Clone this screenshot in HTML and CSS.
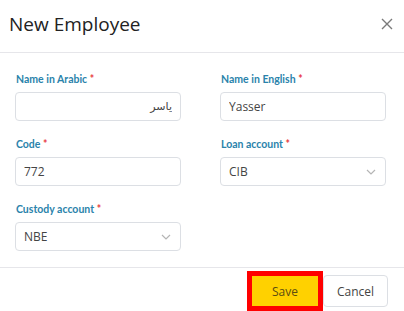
FILE: index.html
```html
<!DOCTYPE html>
<html lang="en">
<head>
    <meta charset="UTF-8">
    <meta name="viewport" content="width=device-width, initial-scale=1.0">
    <title>New Employee</title>
    <link rel="stylesheet" href="styles.css">
</head>
<body>

<div class="modal">
    <div class="modal-header">
        <h1>New Employee</h1>
        <button class="close-btn" type="button" aria-label="Close">
            <svg width="12" height="12" viewBox="0 0 12 12">
                <path d="M1 1 L11 11 M11 1 L1 11" stroke="#7a7a7a" stroke-width="1.4" fill="none"/>
            </svg>
        </button>
    </div>

    <form class="modal-body">
        <div class="field">
            <label>Name in Arabic <span class="req">*</span></label>
            <input type="text" class="input rtl" value="ياسر" dir="rtl">
        </div>
        <div class="field">
            <label>Name in English <span class="req">*</span></label>
            <input type="text" class="input" value="Yasser">
        </div>
        <div class="field">
            <label>Code <span class="req">*</span></label>
            <input type="text" class="input" value="772">
        </div>
        <div class="field">
            <label>Loan account <span class="req">*</span></label>
            <div class="input select">
                <span>CIB</span>
                <svg width="10" height="6" viewBox="0 0 10 6"><path d="M1 1 L5 5 L9 1" stroke="#b5b5b5" stroke-width="1.2" fill="none"/></svg>
            </div>
        </div>
        <div class="field">
            <label>Custody account <span class="req">*</span></label>
            <div class="input select">
                <span>NBE</span>
                <svg width="10" height="6" viewBox="0 0 10 6"><path d="M1 1 L5 5 L9 1" stroke="#b5b5b5" stroke-width="1.2" fill="none"/></svg>
            </div>
        </div>
    </form>

    <div class="modal-footer">
        <button type="button" class="btn btn-save">Save</button>
        <button type="button" class="btn btn-cancel">Cancel</button>
    </div>
</div>

</body>
</html>
```

FILE: styles.css
```css
body {
    margin: 0;
    background-color: #fff;
    font-family: "Open Sans", Arial, sans-serif;
    color: #333;
}
.modal {
    width: 404px;
    height: 311px;
    overflow: hidden;
}
.modal-header {
    height: 52px;
    display: flex;
    align-items: center;
    justify-content: space-between;
    padding: 0 10px 0 9px;
    border-bottom: 1px solid #e6e6ea;
}
.modal-header h1 {
    margin: 0;
    font-size: 19px;
    font-weight: 400;
    color: #222;
    margin-top: -4px;
}
.close-btn {
    background: none;
    border: none;
    padding: 0;
    width: 14px;
    height: 14px;
    display: flex;
    align-items: center;
    justify-content: center;
    margin-top: -4px;
}
.modal-body {
    display: grid;
    grid-template-columns: 166px 166px;
    column-gap: 39px;
    row-gap: 16px;
    padding: 19px 18px 16px 15px;
    border-bottom: 1px solid #e6e6ea;
}
.field label {
    display: block;
    font-family: Lato, sans-serif;
    font-weight: 700;
    font-size: 10.5px;
    line-height: 14px;
    color: #2a83ab;
    margin: 0 0 6px 1px;
}
.req {
    color: #e8383d;
}
.input {
    box-sizing: border-box;
    width: 166px;
    height: 29px;
    border: 1px solid #dcdfe4;
    border-radius: 4px;
    padding: 0 8px;
    font-family: "Open Sans", sans-serif;
    font-size: 12px;
    color: #444;
    background: #fff;
    outline: none;
}
.input.rtl {
    font-family: "DejaVu Sans", sans-serif;
    font-size: 11px;
}
.select {
    display: flex;
    align-items: center;
    justify-content: space-between;
    padding-right: 9px;
}
.modal-footer {
    display: flex;
    justify-content: flex-end;
    align-items: center;
    padding: 3px 16px 0 0;
}
.btn {
    font-family: "Open Sans", sans-serif;
    font-size: 12px;
    cursor: pointer;
}
.btn-save {
    width: 76px;
    height: 40px;
    border: 5px solid #ff0000;
    background-color: #ffd100;
    color: #5c4d10;
    padding: 0;
}
.btn-cancel {
    width: 65px;
    height: 32px;
    background-color: #fff;
    border: 1px solid #dcdfe4;
    border-radius: 4px;
    color: #444;
}
```
